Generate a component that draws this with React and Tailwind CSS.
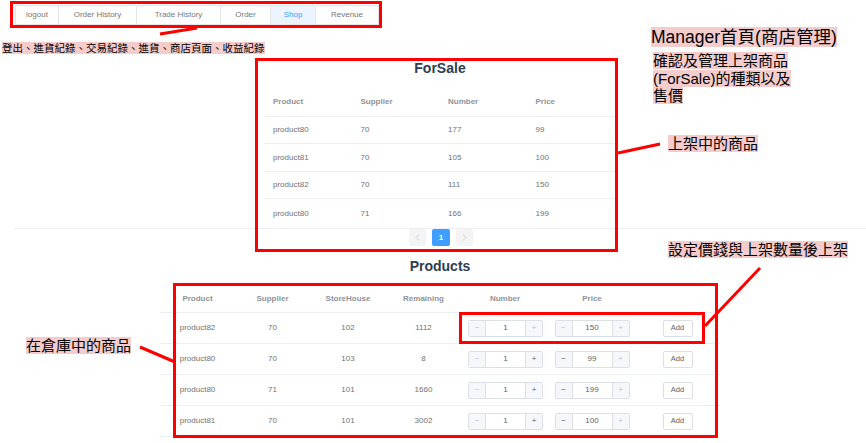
import React from "react";

const navItems = [
  { label: "logout", cls: "w-[44px] border-l" },
  { label: "Order History", cls: "w-[78px]" },
  { label: "Trade History", cls: "w-[84px]" },
  { label: "Order", cls: "w-[50px]" },
  { label: "Shop", cls: "w-[45px] bg-[#ecf5ff] text-[#409eff]", active: true },
  { label: "Revenue", cls: "w-[63px]" },
];

const forSale = [
  { h: "h-[27px] border-b", cells: ["product80", "70", "177", "99"] },
  { h: "h-[28px] border-b", cells: ["product81", "70", "105", "100"] },
  { h: "h-[27px] border-b", cells: ["product82", "70", "111", "150"] },
  { h: "h-[29px]", cells: ["product80", "71", "166", "199"] },
];

const products = [
  { name: "product82", supplier: "70", store: "102", remaining: "1112", price: 150, first: true },
  { name: "product80", supplier: "70", store: "103", remaining: "8", price: 99 },
  { name: "product80", supplier: "71", store: "101", remaining: "1660", price: 199 },
  { name: "product81", supplier: "70", store: "101", remaining: "3002", price: 100 },
];

const Stepper = ({ value, minusOn, plusOn }) => (
  <div className="flex h-[17px] w-[75px] overflow-hidden rounded-[2px] border border-[#dcdfe6] bg-white text-[8px]">
    <span
      className={
        "flex w-[17px] items-center justify-center border-r border-[#dcdfe6] bg-[#f5f7fa] " +
        (minusOn ? "text-[#606266]" : "text-[#c0c4cc]")
      }
    >
      −
    </span>
    <span className="flex flex-1 items-center justify-center text-[#606266]">{value}</span>
    <span
      className={
        "flex w-[17px] items-center justify-center border-l border-[#dcdfe6] bg-[#f5f7fa] " +
        (plusOn ? "text-[#606266]" : "text-[#c0c4cc]")
      }
    >
      +
    </span>
  </div>
);

const Chevron = ({ dir }) => (
  <svg width="5" height="7" viewBox="0 0 5 7" fill="none">
    <path
      d={dir === "left" ? "M4 0.5 L1 3.5 L4 6.5" : "M1 0.5 L4 3.5 L1 6.5"}
      stroke="#c0c4cc"
      strokeWidth="0.8"
    />
  </svg>
);

const Label = ({ className, children }) => (
  <div className={"absolute text-black " + className}>
    <span className="bg-[#f4cccc]">{children}</span>
  </div>
);

export default function App() {
  return (
    <div className="relative h-[443px] w-[866px] overflow-hidden bg-white font-['Liberation_Sans','Noto_Sans_CJK_TC',sans-serif]">
      <div className="pl-[14px]">
        {/* top menu */}
        <nav className="ml-[1px] mt-[5px] flex h-[20px] w-fit border-y border-[#e6e6e6] text-[8px] text-[#777]">
          {navItems.map((item) => (
            <div
              key={item.label}
              className={"flex items-center justify-center border-r border-[#e6e6e6] " + item.cls}
            >
              {item.label}
            </div>
          ))}
        </nav>

        {/* ForSale */}
        <div className="mx-auto mt-[35px] w-[350px]">
          <h2 className="text-center text-[14px] font-bold leading-[16px] text-[#2c3e50]">ForSale</h2>
          <div className="mt-[11px] text-[8px]">
            <div className="grid h-[30px] grid-cols-4 items-center border-b border-[#ebeef5] font-bold text-[#909399]">
              {["Product", "Supplier", "Number", "Price"].map((h) => (
                <div key={h} className="px-[8px]">
                  {h}
                </div>
              ))}
            </div>
            {forSale.map((row, i) => (
              <div
                key={i}
                className={"grid grid-cols-4 items-center border-[#ebeef5] text-[#707276] " + row.h}
              >
                {row.cells.map((c, j) => (
                  <div key={j} className="px-[8px]">
                    {c}
                  </div>
                ))}
              </div>
            ))}
          </div>
        </div>
        <div className="border-t border-[#ebeef5]" />
        <div className="flex justify-center gap-[6px] pl-[2px]">
          <div className="flex h-[17px] w-[17px] items-center justify-center rounded-[2px] bg-[#f4f4f5]">
            <Chevron dir="left" />
          </div>
          <div className="flex h-[17px] w-[18px] items-center justify-center rounded-[2px] bg-[#409eff] text-[8px] font-bold text-white">
            1
          </div>
          <div className="flex h-[17px] w-[17px] items-center justify-center rounded-[2px] bg-[#f4f4f5]">
            <Chevron dir="right" />
          </div>
        </div>

        {/* Products */}
        <h2 className="mt-[12px] text-center text-[14px] font-bold leading-[16px] text-[#2c3e50]">Products</h2>
        <div className="mx-auto mt-[11px] w-[560px] text-center text-[8px]">
          <div className="grid h-[28px] grid-cols-[75px_75px_76px_75px_88px_86px_85px] items-center border-b border-[#ebeef5] font-bold text-[#909399]">
            <div>Product</div>
            <div>Supplier</div>
            <div>StoreHouse</div>
            <div>Remaining</div>
            <div>Number</div>
            <div>Price</div>
            <div />
          </div>
          {products.map((p, i) => (
            <div
              key={i}
              className="grid h-[31px] grid-cols-[75px_75px_76px_75px_88px_86px_85px] items-center border-b border-[#ebeef5] text-[#707276]"
            >
              <div>{p.name}</div>
              <div>{p.supplier}</div>
              <div>{p.store}</div>
              <div>{p.remaining}</div>
              <div className="flex justify-center pl-[1px]">
                <Stepper value={1} minusOn={false} plusOn={!p.first} />
              </div>
              <div className="flex justify-center">
                <Stepper value={p.price} minusOn={!p.first} plusOn={false} />
              </div>
              <div className="flex justify-center">
                <div className="flex h-[17px] w-[30px] items-center justify-center rounded-[2px] border border-[#dcdfe6] text-[7.5px] text-[#606266]">
                  Add
                </div>
              </div>
            </div>
          ))}
        </div>
      </div>

      {/* annotations */}
      <div className="absolute left-[10px] top-[1px] h-[27px] w-[372px] border-[3px] border-[#ff0000]" />
      <div className="absolute left-[255px] top-[58px] h-[194px] w-[363px] border-[3px] border-[#ff0000]" />
      <div className="absolute left-[173px] top-[283px] h-[155px] w-[545px] border-[3px] border-[#ff0000]" />
      <div className="absolute left-[459px] top-[312px] h-[32px] w-[246px] border-[3px] border-[#ff0000]" />

      <svg className="pointer-events-none absolute inset-0" width="866" height="443">
        <g stroke="#ff0000" strokeWidth="3">
          <line x1="160" y1="34" x2="197" y2="28" />
          <line x1="618" y1="153" x2="660" y2="144" />
          <line x1="760" y1="268" x2="705" y2="326" />
          <line x1="140" y1="347" x2="175" y2="362" />
        </g>
      </svg>

      <Label className="left-[2px] top-[42px] text-[10.5px] leading-[13px]">
        登出、進貨紀錄、交易紀錄、進貨、商店頁面、收益紀錄
      </Label>
      <Label className="left-[651px] top-[27px] text-[17.5px] leading-[20px]">Manager首頁(商店管理)</Label>
      <div className="absolute left-[653px] top-[52px] text-[15px] leading-[17.5px] text-black">
        <span className="bg-[#f4cccc]">確認及管理上架商品</span>
        <br />
        <span className="bg-[#f4cccc]">(ForSale)的種類以及</span>
        <br />
        <span className="bg-[#f4cccc]">售價</span>
      </div>
      <Label className="left-[668px] top-[135px] text-[15px] leading-[18px]">上架中的商品</Label>
      <Label className="left-[668px] top-[241px] text-[15px] leading-[18px]">設定價錢與上架數量後上架</Label>
      <Label className="left-[26px] top-[337px] text-[15px] leading-[18px]">在倉庫中的商品</Label>
    </div>
  );
}
